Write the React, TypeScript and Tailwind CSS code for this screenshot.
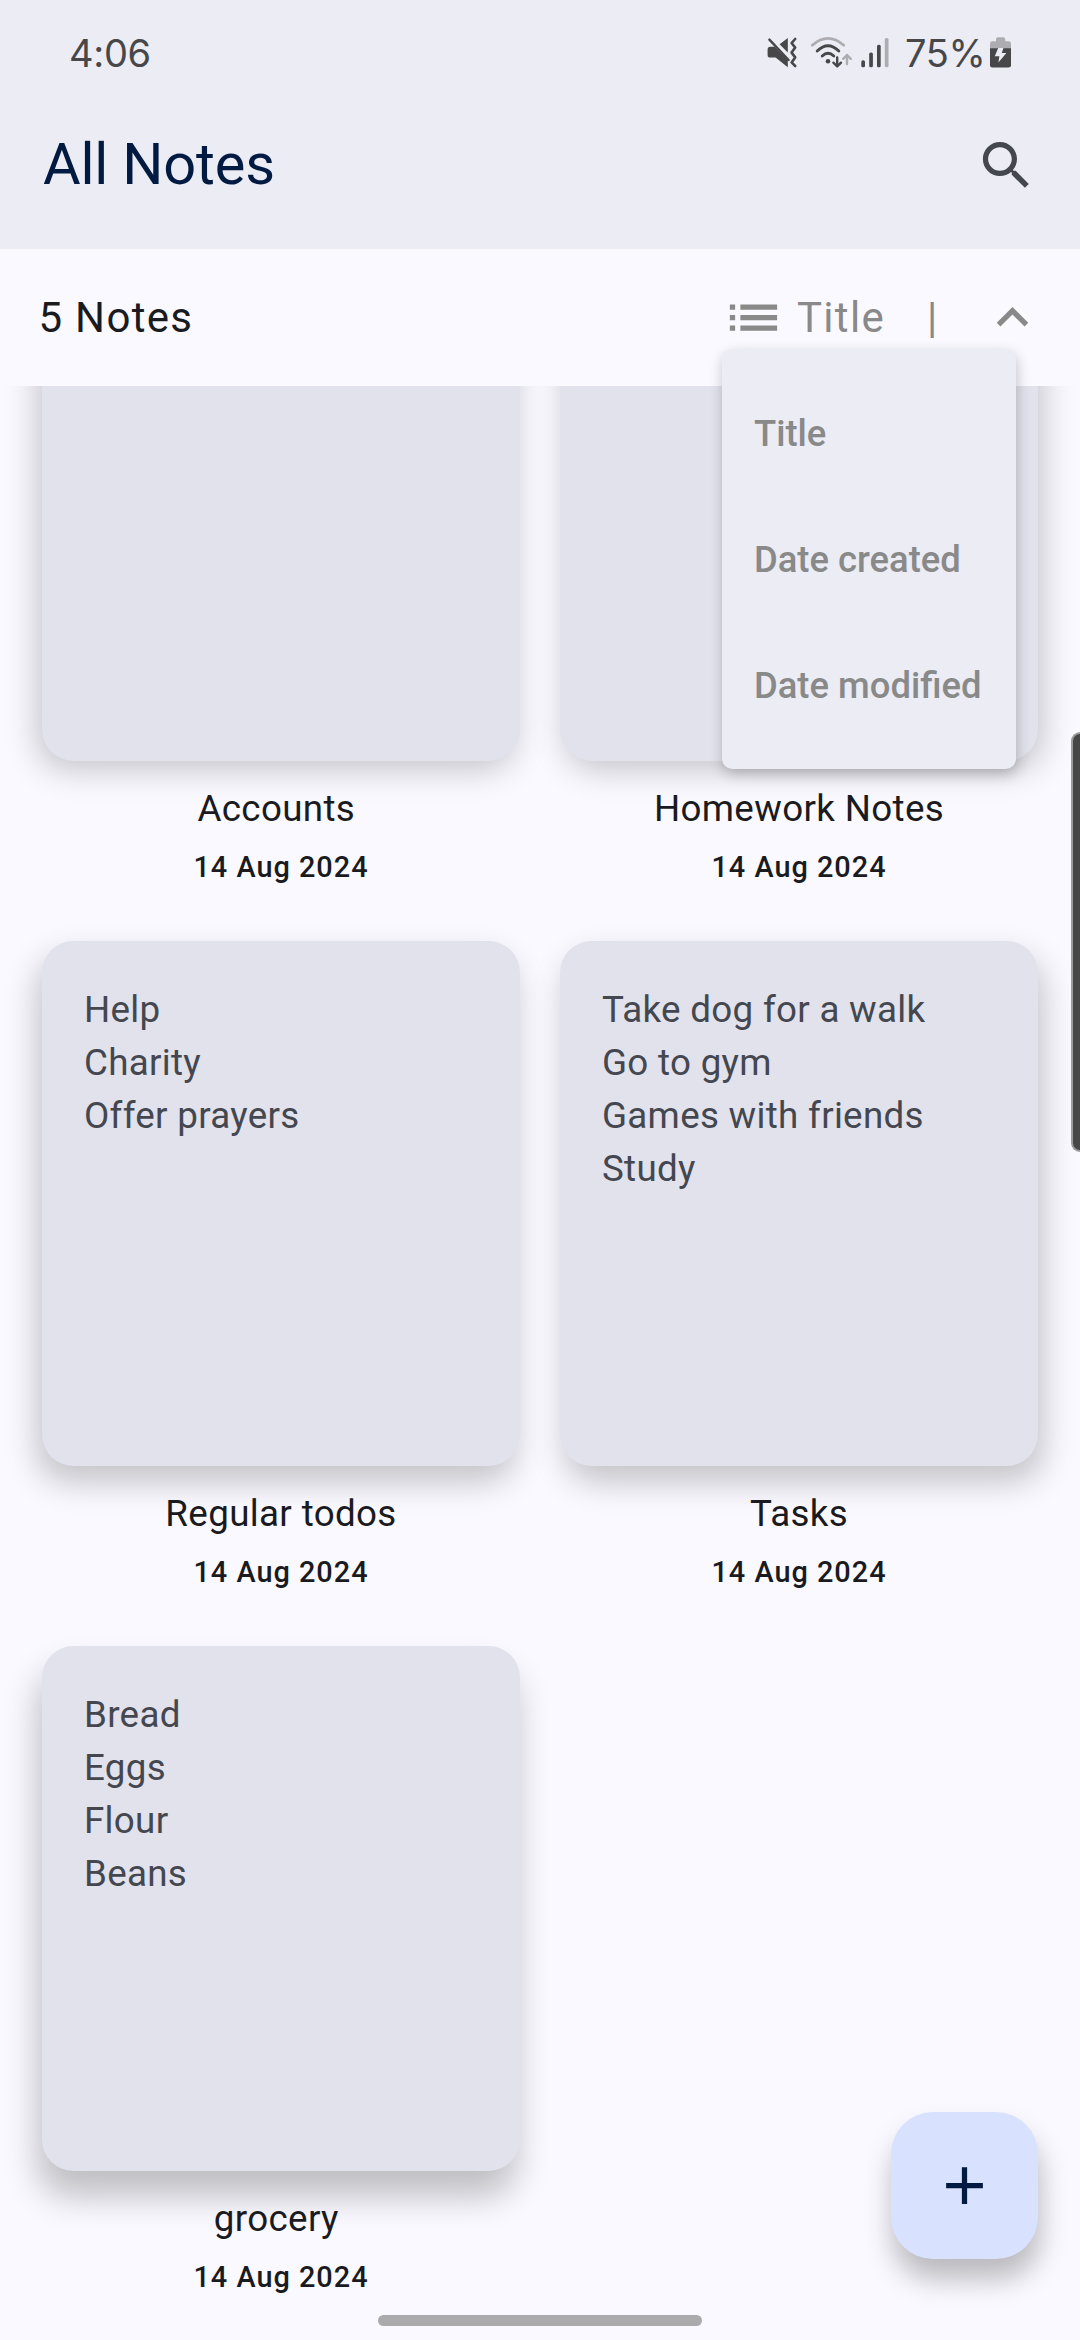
type Note = {
  title: string;
  date: string;
  lines: string[];
  shadow: string;
};

const notes: Note[] = [
  {
    title: 'Accounts ',
    date: '14 Aug 2024',
    lines: [],
    shadow: 'shadow-[-5px_9px_32px_rgba(0,0,0,0.21)]',
  },
  {
    title: 'Homework Notes',
    date: '14 Aug 2024',
    lines: [],
    shadow: 'shadow-[5px_9px_32px_rgba(0,0,0,0.21)]',
  },
  {
    title: 'Regular todos',
    date: '14 Aug 2024',
    lines: ['Help', 'Charity', 'Offer prayers'],
    shadow: 'shadow-[-5px_16px_32px_rgba(0,0,0,0.22)]',
  },
  {
    title: 'Tasks',
    date: '14 Aug 2024',
    lines: ['Take dog for a walk', 'Go to gym', 'Games with friends', 'Study'],
    shadow: 'shadow-[5px_16px_32px_rgba(0,0,0,0.22)]',
  },
  {
    title: 'grocery ',
    date: '14 Aug 2024',
    lines: ['Bread', 'Eggs', 'Flour', 'Beans'],
    shadow: 'shadow-[-4px_25px_34px_rgba(0,0,0,0.24)]',
  },
];

const sortOptions = ['Title', 'Date created', 'Date modified'];

function MutedIcon() {
  return (
    <svg width="36" height="36" viewBox="764 35 36 36" fill="#474749">
      <path d="M767.6 49.5 Q767.6 46.8 770.3 46.8 H774.6 L787.8 60 V67.3 L775.6 57.6 H770.3 Q767.6 57.6 767.6 55 Z" />
      <path d="M779.6 44.2 L787.8 37.9 V52.4 Z" />
      <path d="M769.4 39.6 L788.6 60" stroke="#474749" strokeWidth="2.4" strokeLinecap="round" />
      <path
        d="M795.2 39 L791.6 43 L795.2 47.6 L791.6 52.6 L795.2 57.4 L791.6 62.4 L795.2 66"
        fill="none"
        stroke="#474749"
        strokeWidth="2.6"
        strokeLinecap="round"
        strokeLinejoin="round"
      />
    </svg>
  );
}

function WifiIcon() {
  return (
    <svg width="48" height="36" viewBox="808 35 48 36" fill="none" strokeLinecap="round" strokeLinejoin="round">
      <path d="M812.3 45.2 Q828 31.5 843.7 45.2" stroke="#ADADB1" strokeWidth="2.8" />
      <path d="M817.2 51 Q828 40.6 838.8 51" stroke="#474749" strokeWidth="2.9" />
      <path d="M822.2 56 Q828 50.6 833.8 56" stroke="#474749" strokeWidth="2.9" />
      <circle cx="828" cy="61.3" r="2.3" fill="#474749" />
      <path d="M837.2 57.5 V66.3 M833.4 62.7 L837.2 66.5 L841 62.7" stroke="#474749" strokeWidth="2.4" />
      <path d="M847 64 V55 M843.2 58.8 L847 55 L850.8 58.8" stroke="#ADADB1" strokeWidth="2.4" />
    </svg>
  );
}

function SignalIcon() {
  return (
    <svg width="32" height="36" viewBox="860 35 32 36">
      <rect x="861.3" y="60.3" width="3.7" height="7" rx="1.6" fill="#474749" />
      <rect x="869.2" y="52.6" width="3.7" height="14.7" rx="1.6" fill="#474749" />
      <rect x="877" y="44.7" width="3.7" height="22.6" rx="1.6" fill="#474749" />
      <rect x="884.8" y="38" width="3.7" height="29.3" rx="1.6" fill="#ADADB1" />
    </svg>
  );
}

function BatteryIcon() {
  return (
    <svg width="25" height="36" viewBox="988 35 25 36">
      <path
        d="M996 41.3 V39 Q996 37.2 997.8 37.2 H1003.4 Q1005.2 37.2 1005.2 39 V41.3 H1008.6 Q1011 41.3 1011 43.7 V49 H990 V43.7 Q990 41.3 992.4 41.3 Z"
        fill="#ADADB1"
      />
      <path d="M990 48.3 H1011 V65.2 Q1011 67.6 1008.6 67.6 H992.4 Q990 67.6 990 65.2 Z" fill="#474749" />
      <path d="M998.2 48 H1003.4 L1001.8 53 H1006.4 L998.4 62.6 L999.4 56.2 H994.8 Z" fill="#EBECF4" />
    </svg>
  );
}

function StatusBar() {
  return (
    <div className="flex h-[81px] items-center justify-between pt-[25px] pr-[67px] pl-[69px] font-['Inter',sans-serif] text-[38px] text-[#474749]">
      <span className="tracking-[-0.3px]">4:06</span>
      <div className="flex items-center">
        <MutedIcon />
        <div className="ml-2">
          <WifiIcon />
        </div>
        <div className="ml-1">
          <SignalIcon />
        </div>
        <span className="ml-[13px] w-[83px] tracking-[-0.4px]">75%</span>
        <BatteryIcon />
      </div>
    </div>
  );
}

function SortMenu() {
  return (
    <ul className="absolute top-[349px] left-[722px] z-10 w-[294px] rounded-[10.5px] bg-[#ebecf4] py-[21px] shadow-[1px_5px_14px_rgba(0,0,0,0.23)]">
      {sortOptions.map((option) => (
        <li key={option} className="flex h-[126px] items-center pt-0.5 pl-[32px] text-[36.4px] font-medium text-[#898989]">
          {option}
        </li>
      ))}
    </ul>
  );
}

function NoteCard({ note }: { note: Note }) {
  return (
    <article className="flex flex-col items-center">
      <div
        className={`h-[525px] w-full rounded-[31.5px] bg-[#e1e2eb] px-[42px] pt-[42px] text-[36.75px] leading-[53px] tracking-[0.3px] text-[#44474f] ${note.shadow}`}
      >
        {note.lines.map((line) => (
          <p key={line}>{line}</p>
        ))}
      </div>
      <h2 className="z-[1] mt-[22px] text-[36.75px] leading-[52.5px] tracking-[0.35px] whitespace-pre text-[#1a1b20]">
        {note.title}
      </h2>
      <p className="mt-[10.5px] text-[28.875px] leading-[42px] font-medium tracking-[1px] text-[#1a1b20]">{note.date}</p>
    </article>
  );
}

export default function App() {
  return (
    <div className="relative flex h-[2340px] w-[1080px] flex-col overflow-hidden bg-[#faf9ff] font-['Roboto',sans-serif]">
      <header className="h-[249px] shrink-0 bg-[#ebecf4]">
        <StatusBar />
        <div className="flex h-[168px] items-center justify-between pr-[42px] pl-[43px]">
          <h1 className="text-[57.75px] leading-[73.5px] tracking-[-0.2px] text-[#001a41]">All Notes</h1>
          <svg width="63" height="63" viewBox="0 0 24 24" fill="#44474e">
            <path d="M15.5 14h-.79l-.28-.27C15.41 12.59 16 11.11 16 9.5 16 5.91 13.09 3 9.5 3S3 5.91 3 9.5 5.91 16 9.5 16c1.61 0 3.09-.59 4.23-1.57l.27.28v.79l5 4.99L20.49 19l-4.99-5zm-6 0C7.01 14 5 11.99 5 9.5S7.01 5 9.5 5 14 7.01 14 9.5 11.99 14 9.5 14z" />
          </svg>
        </div>
      </header>

      <div className="flex h-[137px] shrink-0 items-center pr-[36px] pl-[38.5px] text-[42px] tracking-[1.3px] text-[#898989]">
        <span className="flex-1 text-[#1a1b20]">5 Notes</span>
        <svg width="63" height="63" viewBox="0 0 24 24" fill="currentColor">
          <path d="M3 13h2v-2H3v2zm0 4h2v-2H3v2zm0-8h2V7H3v2zm4 4h14v-2H7v2zm0 4h14v-2H7v2zM7 7v2h14V7H7z" />
        </svg>
        <span className="ml-[12px] w-[130px]">Title</span>
        <span className="w-[54px]">|</span>
        <svg width="63" height="63" viewBox="0 0 24 24" fill="currentColor">
          <path d="M7.41 15.41L12 10.83l4.59 4.58L18 14l-6-6-6 6z" />
        </svg>
      </div>

      <main className="min-h-0 flex-1 overflow-hidden">
        <div className="-mt-[150px] grid grid-cols-2 gap-x-[40px] gap-y-[53px] px-[42px]">
          {notes.map((note) => (
            <NoteCard key={note.title} note={note} />
          ))}
        </div>
      </main>

      <SortMenu />

      <div className="absolute top-[732px] right-0 h-[420px] w-[9px] rounded-l-[11px] border-2 border-r-0 border-[#9b9b9d] bg-[#474747]" />

      <button
        aria-label="Add note"
        className="absolute top-[2112px] left-[891px] flex size-[147px] items-center justify-center rounded-[42px] bg-[#d8e2ff] shadow-[2px_20px_28px_rgba(0,0,0,0.26)]"
      >
        <svg width="63" height="63" viewBox="0 0 24 24" fill="#001a41">
          <path d="M19 13h-6v6h-2v-6H5v-2h6V5h2v6h6v2z" />
        </svg>
      </button>

      <div className="absolute bottom-[14px] left-[378px] h-[11px] w-[324px] rounded-full bg-[#ababae]" />
    </div>
  );
}
